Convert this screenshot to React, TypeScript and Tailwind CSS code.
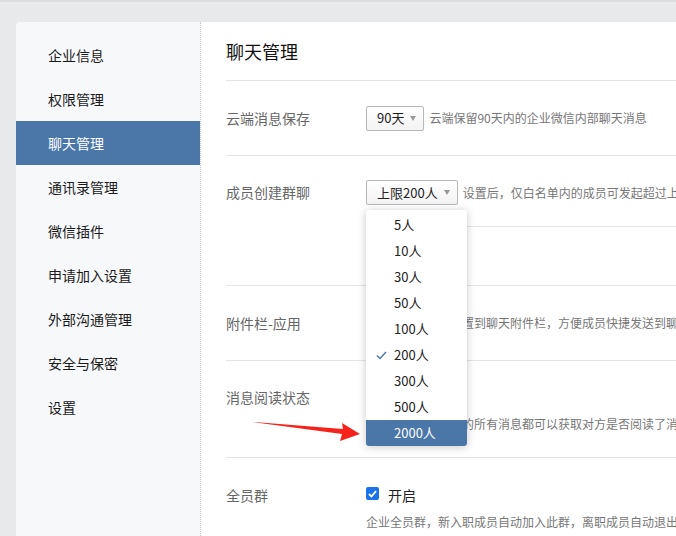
import React from "react";

const font = { fontFamily: '"Noto Sans CJK SC", "Noto Sans", sans-serif' };

const navItems = ["企业信息", "权限管理", "聊天管理", "通讯录管理", "微信插件", "申请加入设置", "外部沟通管理", "安全与保密", "设置"];
const options = ["5人", "10人", "30人", "50人", "100人", "200人", "300人", "500人", "2000人"];

function Caret() {
  return (
    <svg width="6" height="5" viewBox="0 0 6 5" className="shrink-0">
      <path d="M0 0 H6 L3 5 Z" fill="#9a9a9a" />
    </svg>
  );
}

function Select({ label, children }: { label: string; children?: React.ReactNode }) {
  return (
    <div className="relative shrink-0">
      <div className="h-[25px] flex items-center gap-[6px] pl-[10px] pr-[7px] border border-[#b8b8b8] rounded-[2px] bg-gradient-to-b from-white to-[#f3f3f3] text-[13px] text-[#222]">
        <span>{label}</span>
        <Caret />
      </div>
      {children}
    </div>
  );
}

function Check({ color = "#4a76a8" }: { color?: string }) {
  return (
    <svg width="11" height="9" viewBox="0 0 11 9">
      <path d="M1 4.5 L4 7.5 L10 1" fill="none" stroke={color} strokeWidth="1.4" />
    </svg>
  );
}

export default function App() {
  return (
    <div className="relative w-[676px] h-[536px] overflow-hidden bg-[#e8e9eb] border-t-2 border-[#dcdddf] pt-[20px] pl-[16px] flex" style={font}>
      {/* Sidebar */}
      <div className="w-[185px] shrink-0 bg-[#f7f8fa] rounded-tl-[4px] border-r border-dotted border-[#c9ccd2] pt-[11px]">
        {navItems.map((item) => {
          const active = item === "聊天管理";
          return (
            <div
              key={item}
              className={`h-[44px] flex items-center pl-[32px] text-[14px] ${active ? "bg-[#4a76a8] text-white" : "text-[#1a1a1a]"}`}
            >
              {item}
            </div>
          );
        })}
      </div>

      {/* Main */}
      <div className="flex-1 bg-white pl-[25px] overflow-hidden whitespace-nowrap">
        <div className="h-[59px] flex items-center border-b border-[#e3e5e8] text-[18px] text-[#111]">聊天管理</div>

        {/* Row 1 */}
        <div className="h-[75px] flex items-center border-b border-[#e3e5e8]">
          <div className="w-[140px] shrink-0 text-[14px] text-[#666]">云端消息保存</div>
          <Select label="90天" />
          <span className="ml-[5px] text-[12px] text-[#777]">云端保留90天内的企业微信内部聊天消息</span>
        </div>

        {/* Row 2 */}
        <div className="h-[130px] flex border-b border-[#e3e5e8] pt-[24px]">
          <div className="w-[140px] shrink-0 h-[25px] flex items-center text-[14px] text-[#666]">成员创建群聊</div>
          <div className="flex-1 flex flex-col">
            <div className="flex items-center h-[25px]">
              <Select label="上限200人">
                <div className="absolute z-10 top-[30px] left-0 w-[101px] bg-white rounded-[3px] shadow-[0_1px_8px_rgba(0,0,0,0.22)] pt-[2px] overflow-hidden">
                  {options.map((o) => {
                    const hl = o === "2000人";
                    const sel = o === "200人";
                    return (
                      <div
                        key={o}
                        className={`h-[26px] flex items-center text-[13px] ${hl ? "bg-[#4a76a8] text-white" : "text-[#222]"}`}
                      >
                        <span className="w-[28px] flex justify-center pl-[2px]">{sel ? <Check /> : null}</span>
                        <span>{o}</span>
                      </div>
                    );
                  })}
                </div>
              </Select>
              <span className="ml-[5px] text-[12px] text-[#777]">设置后，仅白名单内的成员可发起超过上限人数的群聊</span>
            </div>
            <div className="mt-[21px] border-t border-[#e3e5e8]" />
          </div>
        </div>

        {/* Row 3 */}
        <div className="h-[75px] flex items-center border-b border-[#e3e5e8]">
          <div className="w-[140px] shrink-0 text-[14px] text-[#666]">附件栏-应用</div>
          <span className="text-[12px] text-[#777]">支持将自建应用配置到聊天附件栏，方便成员快捷发送到聊天中</span>
        </div>

        {/* Row 4 */}
        <div className="h-[97px] flex border-b border-[#e3e5e8] pt-[26px]">
          <div className="w-[140px] shrink-0 h-[20px] flex items-center text-[14px] text-[#666]">消息阅读状态</div>
          <div className="flex flex-col">
            <div className="h-[20px] flex items-center gap-[9px] text-[14px] text-[#222]">
              <span className="w-[13px] h-[13px] rounded-[2px] bg-[#1a73e8]" />
              开启
            </div>
            <div className="mt-[7px] h-[20px] flex items-center text-[12px] text-[#777]">开启后，成员发送的所有消息都可以获取对方是否阅读了消息</div>
          </div>
        </div>

        {/* Row 5 */}
        <div className="flex pt-[27px]">
          <div className="w-[140px] shrink-0 h-[20px] flex items-center text-[14px] text-[#666]">全员群</div>
          <div className="flex flex-col">
            <div className="h-[20px] flex items-center gap-[9px] text-[14px] text-[#222]">
              <span className="w-[13px] h-[13px] -mt-[3px] rounded-[2px] bg-[#1a73e8] flex items-center justify-center">
                <svg width="9" height="8" viewBox="0 0 9 8">
                  <path d="M1 4 L3.5 6.5 L8 1.2" fill="none" stroke="white" strokeWidth="1.8" />
                </svg>
              </span>
              开启
            </div>
            <div className="mt-[7px] h-[20px] flex items-center text-[12px] text-[#777]">企业全员群，新入职成员自动加入此群，离职成员自动退出此群</div>
          </div>
        </div>
      </div>

      {/* Red arrow annotation */}
      <svg className="absolute left-[250px] top-[415px]" width="112" height="28" viewBox="0 0 112 28">
        <polygon points="3,5 93,12 92,6 110,17 90,24 92,17" fill="#f5231b" />
      </svg>
    </div>
  );
}
